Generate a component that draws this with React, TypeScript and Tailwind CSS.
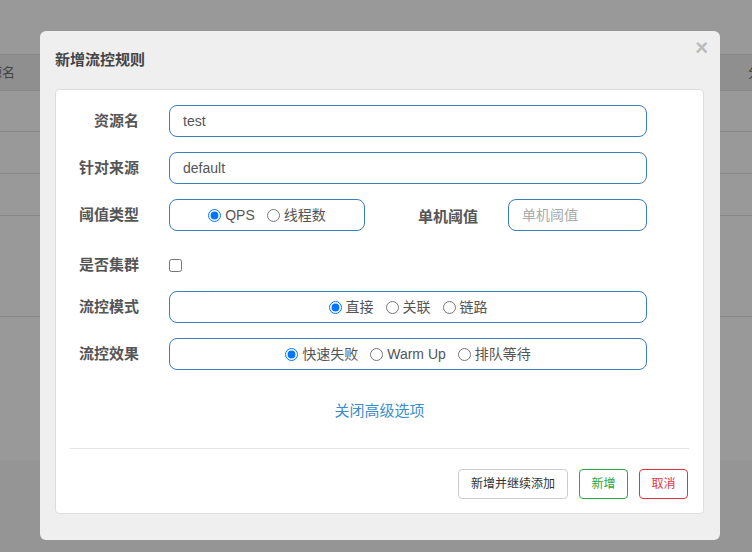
import React from "react";

const font = "font-['Liberation_Sans','Noto_Sans_CJK_SC',sans-serif]";

type RadioOpt = { label: string; checked?: boolean };

const RadioGroup = ({ name, options }: { name: string; options: RadioOpt[] }) => (
  <div className="flex items-center justify-center gap-[12px] text-[14px] text-[#555]">
    {options.map((o) => (
      <label key={o.label} className="flex items-center gap-[4px]">
        <input
          type="radio"
          name={name}
          defaultChecked={o.checked}
          className="m-0 w-[13px] h-[13px]"
        />
        <span>{o.label}</span>
      </label>
    ))}
  </div>
);

const Label = ({ text, w = "w-[83px]" }: { text: string; w?: string }) => (
  <div className={`${w} text-right text-[15px] font-bold text-[#555] shrink-0`}>{text}</div>
);

const TextInput = ({ value, placeholder, w }: { value?: string; placeholder?: string; w: string }) => (
  <input
    defaultValue={value}
    placeholder={placeholder}
    className={`${w} h-[32px] rounded-[8px] border border-[#3a7dbd] px-[13px] text-[14px] text-[#555] placeholder:text-[#aaa] outline-none bg-white`}
  />
);

const BoxGroup = ({ w, children }: { w: string; children: React.ReactNode }) => (
  <div className={`${w} h-[32px] rounded-[8px] border border-[#3a7dbd] flex items-center justify-center`}>
    {children}
  </div>
);

export default function App() {
  return (
    <div className={`relative w-[752px] h-[552px] overflow-hidden bg-[#999] ${font}`}>
      {/* page behind the overlay */}
      <div className="h-[55px] border-b border-[#878787]" />
      <div className="h-[36px] bg-[#8f8f8f] border-b border-[#878787] flex items-center justify-between text-[13px] text-[#444]">
        <span className="ml-[-24px]">资源名</span>
        <span className="mr-[-9px]">分</span>
      </div>
      <div className="h-[41px] border-b border-[#878787]" />
      <div className="h-[42px] border-b border-[#878787]" />
      <div className="h-[42px] border-b border-[#878787]" />
      <div className="h-[101px] border-b border-[#878787]" />
      <div className="h-[143px]" />
      <div className="h-[92px] bg-[#959595]" />

      {/* modal */}
      <div className="absolute left-[40px] top-[31px] w-[680px] h-[509px] bg-[#efefef] rounded-[6px]">
        <div className="h-[58px] px-[15px] flex items-center">
          <span className="text-[15px] font-bold text-[#444]">新增流控规则</span>
        </div>
        <span className="absolute right-[12px] top-[6px] text-[22px] leading-none font-bold text-[#bbb]">×</span>

        <div className="ml-[15px] w-[649px] h-[425px] bg-white border border-[#ddd] rounded-[4px] pt-[15px]">
          <div className="flex items-center h-[32px] gap-[30px]">
            <Label text="资源名" />
            <TextInput value="test" w="w-[478px]" />
          </div>
          <div className="flex items-center h-[32px] gap-[30px] mt-[15px]">
            <Label text="针对来源" />
            <TextInput value="default" w="w-[478px]" />
          </div>
          <div className="flex items-center h-[32px] mt-[15px]">
            <Label text="阈值类型" />
            <div className="ml-[30px]">
              <BoxGroup w="w-[196px]">
                <RadioGroup name="grade" options={[{ label: "QPS", checked: true }, { label: "线程数" }]} />
              </BoxGroup>
            </div>
            <div className="pt-[4px]">
              <Label text="单机阈值" w="w-[113px]" />
            </div>
            <div className="ml-[30px]">
              <TextInput placeholder="单机阈值" w="w-[139px]" />
            </div>
          </div>
          <div className="flex items-center h-[30px] gap-[30px] mt-[19px]">
            <Label text="是否集群" />
            <input type="checkbox" className="m-0 w-[13px] h-[13px]" />
          </div>
          <div className="flex items-center h-[32px] gap-[30px] mt-[11px]">
            <Label text="流控模式" />
            <BoxGroup w="w-[478px]">
              <RadioGroup
                name="strategy"
                options={[{ label: "直接", checked: true }, { label: "关联" }, { label: "链路" }]}
              />
            </BoxGroup>
          </div>
          <div className="flex items-center h-[32px] gap-[30px] mt-[15px]">
            <Label text="流控效果" />
            <BoxGroup w="w-[478px]">
              <RadioGroup
                name="behavior"
                options={[{ label: "快速失败", checked: true }, { label: "Warm Up" }, { label: "排队等待" }]}
              />
            </BoxGroup>
          </div>

          <div className="mt-[31px] h-[20px] flex items-center justify-center text-[15px] text-[#3c8dcc]">
            关闭高级选项
          </div>

          <div className="mx-[14px] mt-[27px] border-t border-[#e5e5e5]" />

          <div className="flex justify-end gap-[11px] pr-[15px] mt-[20px]">
            <button className="h-[30px] px-[12px] rounded-[4px] border border-[#ccc] bg-white text-[12px] text-[#333]">
              新增并继续添加
            </button>
            <button className="h-[30px] w-[49px] rounded-[4px] border border-[#28a745] bg-white text-[12px] text-[#28a745]">
              新增
            </button>
            <button className="h-[30px] w-[49px] rounded-[4px] border border-[#dc3545] bg-white text-[12px] text-[#dc3545]">
              取消
            </button>
          </div>
        </div>
      </div>
    </div>
  );
}
